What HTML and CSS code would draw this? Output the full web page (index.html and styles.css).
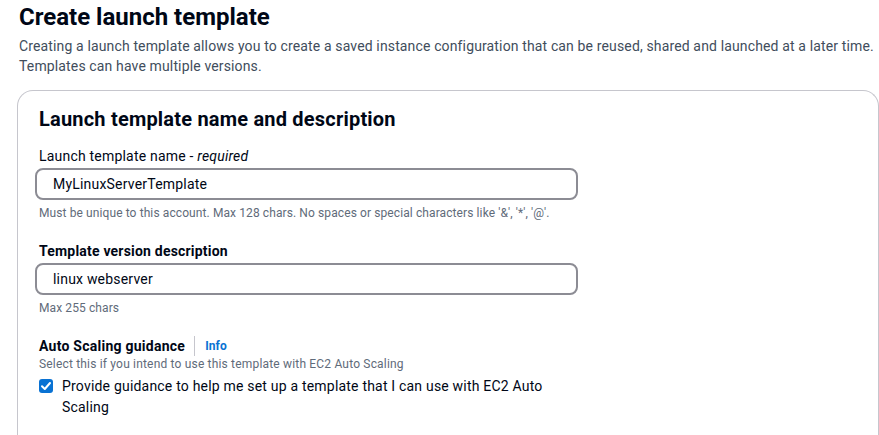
FILE: index.html
```html
<!DOCTYPE html>
<html lang="en">
<head>
<meta charset="utf-8">
<title>Create launch template</title>
<link rel="stylesheet" href="styles.css">
</head>
<body>
<div class="page">
  <header class="page-header">
    <h1 class="title">Create launch template</h1>
    <p class="desc">Creating a launch template allows you to create a saved instance configuration that can be reused, shared and launched at a later time. Templates can have multiple versions.</p>
  </header>
  <section class="card">
    <h2 class="card-title">Launch template name and description</h2>
    <div class="form">
      <div class="field">
        <label class="label">Launch template name - <em>required</em></label>
        <div class="input">MyLinuxServerTemplate</div>
        <div class="hint">Must be unique to this account. Max 128 chars. No spaces or special characters like '&amp;', '*', '@'.</div>
      </div>
      <div class="field">
        <label class="label bold">Template version description</label>
        <div class="input">linux webserver</div>
        <div class="hint">Max 255 chars</div>
      </div>
      <div class="field">
        <div class="label-row">
          <span class="label bold">Auto Scaling guidance</span>
          <span class="sep"></span>
          <a class="info">Info</a>
        </div>
        <div class="hint tight">Select this if you intend to use this template with EC2 Auto Scaling</div>
        <div class="check-row">
          <span class="checkbox">
            <svg viewBox="0 0 14 14" width="14" height="14"><path d="M3 7.2 L5.8 10 L11 4" fill="none" stroke="#fff" stroke-width="2" stroke-linecap="round" stroke-linejoin="round"/></svg>
          </span>
          <span class="check-text">Provide guidance to help me set up a template that I can use with EC2 Auto Scaling</span>
        </div>
      </div>
    </div>
  </section>
</div>
</body>
</html>
```

FILE: styles.css
```css
* { box-sizing: border-box; }
html, body { margin: 0; padding: 0; background: #fff; }
body {
  font-family: Roboto, "Noto Sans", Arial, sans-serif;
  color: #000716;
  font-size: 14px;
  line-height: 20px;
  overflow: hidden;
}
.page { padding: 0 0 0 17px; width: 879px; }
.page-header { padding-left: 2px; }
.title {
  margin: 0;
  padding-top: 2px;
  font-size: 24px;
  line-height: 30px;
  font-weight: 700;
  letter-spacing: 0;
}
.desc {
  margin: 4px 0 0;
  color: #414d5c;
  font-size: 14px;
  line-height: 20px;
  letter-spacing: 0.14px;
}
.card {
  margin-top: 14px;
  border: 1px solid #c6c6cd;
  border-bottom: none;
  border-radius: 16px 16px 0 0;
  padding: 16px 20px 30px 21px;
  height: 360px;
}
.card-title {
  margin: 0;
  font-size: 20px;
  line-height: 24px;
  font-weight: 700;
  letter-spacing: 0.2px;
}
.form {
  width: 543px;
  margin-left: -4px;
  padding-top: 15px;
  display: flex;
  flex-direction: column;
  gap: 20px;
}
.field { display: flex; flex-direction: column; }
.label, .label-row { padding-left: 4px; letter-spacing: 0.2px; }
.label em { font-style: italic; }
.bold { font-weight: 700; }
.label { line-height: 20px; }
.label-row .label.bold { letter-spacing: 0.25px; }
.input {
  margin-top: 2px;
  height: 32px;
  border: 2px solid #8c8c94;
  border-radius: 8px;
  padding: 4px 16px;
  line-height: 20px;
  letter-spacing: 0.2px;
}
.hint {
  margin-top: 5px;
  padding-left: 4px;
  font-size: 12px;
  line-height: 16px;
  color: #5f6b7a;
  letter-spacing: 0.1px;
}
.hint.tight { margin-top: 0; letter-spacing: 0.18px; }
.label-row { display: flex; align-items: center; }
.label-row .label { padding-left: 0; }
.sep {
  width: 1px;
  height: 20px;
  background: #c6c6cd;
  margin: 0 10px 0 9px;
}
.info {
  color: #0972d3;
  font-weight: 700;
  font-size: 12px;
  letter-spacing: 0.1px;
}
.check-row {
  display: flex;
  align-items: flex-start;
  gap: 9px;
  margin-top: 4px;
  padding-left: 4px;
}
.checkbox {
  flex: none;
  width: 14px;
  height: 14px;
  margin-top: 3px;
  border-radius: 3px;
  background: #0972d3;
  display: flex;
}
.check-text {
  line-height: 21px;
  letter-spacing: 0.2px;
}
```
